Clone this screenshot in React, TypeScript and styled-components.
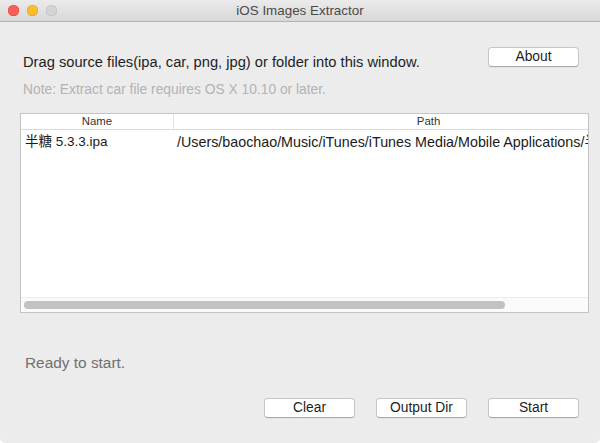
import React from "react";
import styled, { createGlobalStyle } from "styled-components";

const GlobalStyle = createGlobalStyle`
  html, body {
    margin: 0;
    padding: 0;
    background: #ffffff;
  }
  body {
    font-family: "Liberation Sans", Arial, "Noto Sans CJK SC", sans-serif;
    -webkit-font-smoothing: antialiased;
  }
`;

const Window = styled.div`
  width: 600px;
  height: 443px;
  background: #ececec;
  display: flex;
  flex-direction: column;
  overflow: hidden;
  border-radius: 0 0 5px 5px;
`;

const TitleBar = styled.div`
  height: 21px;
  flex: none;
  display: flex;
  align-items: center;
  position: relative;
  background: linear-gradient(#ebebeb, #d8d8d8);
  border-bottom: 1px solid #b4b4b4;
`;

const Lights = styled.div`
  display: flex;
  gap: 8px;
  padding-left: 8px;
`;

const Light = styled.span<{ $color: string; $ring: string }>`
  width: 11px;
  height: 11px;
  border-radius: 50%;
  background: ${(p) => p.$color};
  box-shadow: inset 0 0 0 0.5px ${(p) => p.$ring};
`;

const Title = styled.div`
  position: absolute;
  left: 0;
  right: 0;
  text-align: center;
  font-size: 13.4px;
  color: #4a4a4a;
  pointer-events: none;
`;

const Body = styled.div`
  flex: 1;
  display: flex;
  flex-direction: column;
  padding: 0 11px 0 20px;
`;

const TopRow = styled.div`
  display: flex;
  justify-content: space-between;
  align-items: flex-start;
  height: 91px;
`;

const Intro = styled.div`
  padding: 32px 0 0 3px;
  display: flex;
  flex-direction: column;
  gap: 11px;
`;

const Lead = styled.div`
  font-size: 14.7px;
  line-height: 17px;
  color: #1e1e1e;
`;

const Note = styled.div`
  font-size: 13.8px;
  line-height: 16px;
  color: #b3b3b3;
`;

const Button = styled.button`
  width: 91px;
  height: 20px;
  padding: 0;
  background: #ffffff;
  border: 1px solid #c6c6c6;
  border-bottom-color: #ababab;
  border-radius: 4px;
  box-shadow: 0 0.5px 0.5px rgba(0, 0, 0, 0.08);
  font-family: inherit;
  font-size: 13.8px;
  color: #1e1e1e;
  line-height: 18px;
`;

const AboutButton = styled(Button)`
  margin: 25px 10px 0 0;
`;

const Table = styled.div`
  height: 200px;
  background: #ffffff;
  border: 1px solid #c4c4c4;
  display: flex;
  flex-direction: column;
  box-sizing: border-box;
  overflow: hidden;
`;

const Columns = styled.div`
  display: grid;
  grid-template-columns: 152px 510px;
`;

const HeaderRow = styled(Columns)`
  height: 15px;
  border-bottom: 1px solid #dadada;
`;

const HeaderCell = styled.div<{ $divider?: boolean }>`
  font-size: 11.4px;
  line-height: 15px;
  text-align: center;
  color: #333333;
  border-left: ${(p) => (p.$divider ? "1px solid #e2e2e2" : "none")};
`;

const Row = styled(Columns)`
  height: 20px;
  align-items: center;
`;

const Cell = styled.div<{ $size: number }>`
  font-size: ${(p) => p.$size}px;
  padding-left: 4px;
  color: #1a1a1a;
  white-space: nowrap;
  overflow: hidden;
`;

const Spacer = styled.div`
  flex: 1;
`;

const ScrollTrack = styled.div`
  height: 14px;
  border-top: 1px solid #ececec;
  background: #fafafa;
  display: flex;
  align-items: center;
  padding-left: 3px;
`;

const ScrollThumb = styled.div`
  width: 481px;
  height: 8px;
  border-radius: 4px;
  background: #c2c2c2;
`;

const Status = styled.div`
  margin-top: 41px;
  padding-left: 5px;
  font-size: 15.4px;
  line-height: 18px;
  color: #707070;
`;

const Actions = styled.div`
  margin-top: 26px;
  display: flex;
  justify-content: flex-end;
  gap: 21px;
  padding-right: 10px;
`;

export default function App() {
  return (
    <>
      <GlobalStyle />
      <Window>
        <TitleBar>
          <Lights>
            <Light $color="#fc5f57" $ring="#e0443e" />
            <Light $color="#fdbb2e" $ring="#dea123" />
            <Light $color="#d4d4d4" $ring="#bdbdbd" />
          </Lights>
          <Title>iOS Images Extractor</Title>
        </TitleBar>
        <Body>
          <TopRow>
            <Intro>
              <Lead>Drag source files(ipa, car, png, jpg) or folder into this window.</Lead>
              <Note>Note: Extract car file requires OS X 10.10 or later.</Note>
            </Intro>
            <AboutButton>About</AboutButton>
          </TopRow>
          <Table>
            <HeaderRow>
              <HeaderCell>Name</HeaderCell>
              <HeaderCell $divider>Path</HeaderCell>
            </HeaderRow>
            <Row>
              <Cell $size={13.5}>半糖 5.3.3.ipa</Cell>
              <Cell $size={14.3}>/Users/baochao/Music/iTunes/iTunes Media/Mobile Applications/半糖 5.3.3.ipa</Cell>
            </Row>
            <Spacer />
            <ScrollTrack>
              <ScrollThumb />
            </ScrollTrack>
          </Table>
          <Status>Ready to start.</Status>
          <Actions>
            <Button>Clear</Button>
            <Button>Output Dir</Button>
            <Button>Start</Button>
          </Actions>
        </Body>
      </Window>
    </>
  );
}
